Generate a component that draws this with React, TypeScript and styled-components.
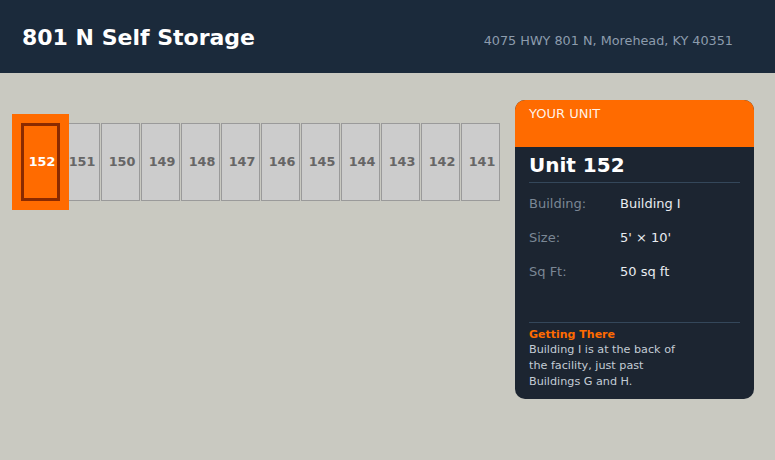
import React from "react";
import styled, { createGlobalStyle } from "styled-components";

const Global = createGlobalStyle`
  html, body { margin: 0; padding: 0; }
  body {
    background: #c9c9c1;
    font-family: "DejaVu Sans", "Noto Sans", sans-serif;
    width: 775px;
    height: 460px;
    overflow: hidden;
  }
`;

const Header = styled.header`
  height: 73px;
  box-sizing: border-box;
  background: #1b2a3b;
  display: flex;
  align-items: baseline;
  justify-content: space-between;
  padding: 24px 42px 0 22px;
`;

const Title = styled.h1`
  margin: 0;
  font-size: 22px;
  font-weight: 700;
  color: #ffffff;
  line-height: 28px;
`;

const Address = styled.div`
  font-size: 12.8px;
  color: #8d9cad;
`;

const Main = styled.main`
  display: flex;
  justify-content: space-between;
  align-items: flex-start;
  padding: 27px 21px;
`;

const UnitRow = styled.div`
  display: flex;
  gap: 1px;
  margin-top: 23px;
`;

const Cell = styled.div<{ $active?: boolean }>`
  width: 39px;
  height: 78px;
  box-sizing: border-box;
  display: flex;
  align-items: center;
  justify-content: center;
  padding-left: 3px;
  font-size: 12.8px;
  line-height: 1;
  font-weight: 700;
  background: ${(p) => (p.$active ? "#ff6b00" : "#cccccc")};
  color: ${(p) => (p.$active ? "#ffffff" : "#666666")};
  border: ${(p) => (p.$active ? "3px solid #8b2a00" : "1px solid #9a9a9a")};
  ${(p) =>
    p.$active &&
    `
    position: relative;
    z-index: 1;
    box-shadow: 0 0 0 9px #ff6b00;
  `}
`;

const Card = styled.aside`
  width: 239px;
  border-radius: 10px;
  overflow: hidden;
  background: #1c2531;
`;

const CardHead = styled.div`
  height: 47px;
  box-sizing: border-box;
  background: #ff6b00;
  padding: 6px 14px;
  font-size: 13px;
  line-height: 15px;
  color: rgba(255, 255, 255, 0.92);
`;

const CardBody = styled.div`
  padding: 6px 14px 9px;
`;

const UnitName = styled.div`
  font-size: 20px;
  font-weight: 700;
  line-height: 24px;
  color: #ffffff;
  padding-bottom: 5px;
  border-bottom: 1px solid #34475a;
  margin-bottom: 3px;
`;

const InfoRow = styled.div`
  display: grid;
  grid-template-columns: 91px 1fr;
  padding: 11px 0 9px;
  font-size: 13px;
  line-height: 14px;
`;

const Label = styled.span`
  color: #7b8795;
`;

const Value = styled.span`
  color: #e8ecf0;
`;

const Directions = styled.div`
  margin-top: 34px;
  border-top: 1px solid #34475a;
  padding-top: 5px;
`;

const DirTitle = styled.div`
  font-size: 11px;
  font-weight: 700;
  line-height: 14px;
  color: #ff6b00;
`;

const DirText = styled.p`
  margin: 0;
  max-width: 160px;
  font-size: 11.2px;
  line-height: 16px;
  color: #c3ccd5;
`;

const units = [152, 151, 150, 149, 148, 147, 146, 145, 144, 143, 142, 141];

const info = [
  ["Building:", "Building I"],
  ["Size:", "5' × 10'"],
  ["Sq Ft:", "50 sq ft"],
];

export default function App() {
  return (
    <>
      <Global />
      <Header>
        <Title>801 N Self Storage</Title>
        <Address>4075 HWY 801 N, Morehead, KY 40351</Address>
      </Header>
      <Main>
        <UnitRow>
          {units.map((u) => (
            <Cell key={u} $active={u === 152}>
              {u}
            </Cell>
          ))}
        </UnitRow>
        <Card>
          <CardHead>YOUR UNIT</CardHead>
          <CardBody>
            <UnitName>Unit 152</UnitName>
            {info.map(([l, v]) => (
              <InfoRow key={l}>
                <Label>{l}</Label>
                <Value>{v}</Value>
              </InfoRow>
            ))}
            <Directions>
              <DirTitle>Getting There</DirTitle>
              <DirText>
                Building I is at the back of the facility, just past Buildings G and H.
              </DirText>
            </Directions>
          </CardBody>
        </Card>
      </Main>
    </>
  );
}
